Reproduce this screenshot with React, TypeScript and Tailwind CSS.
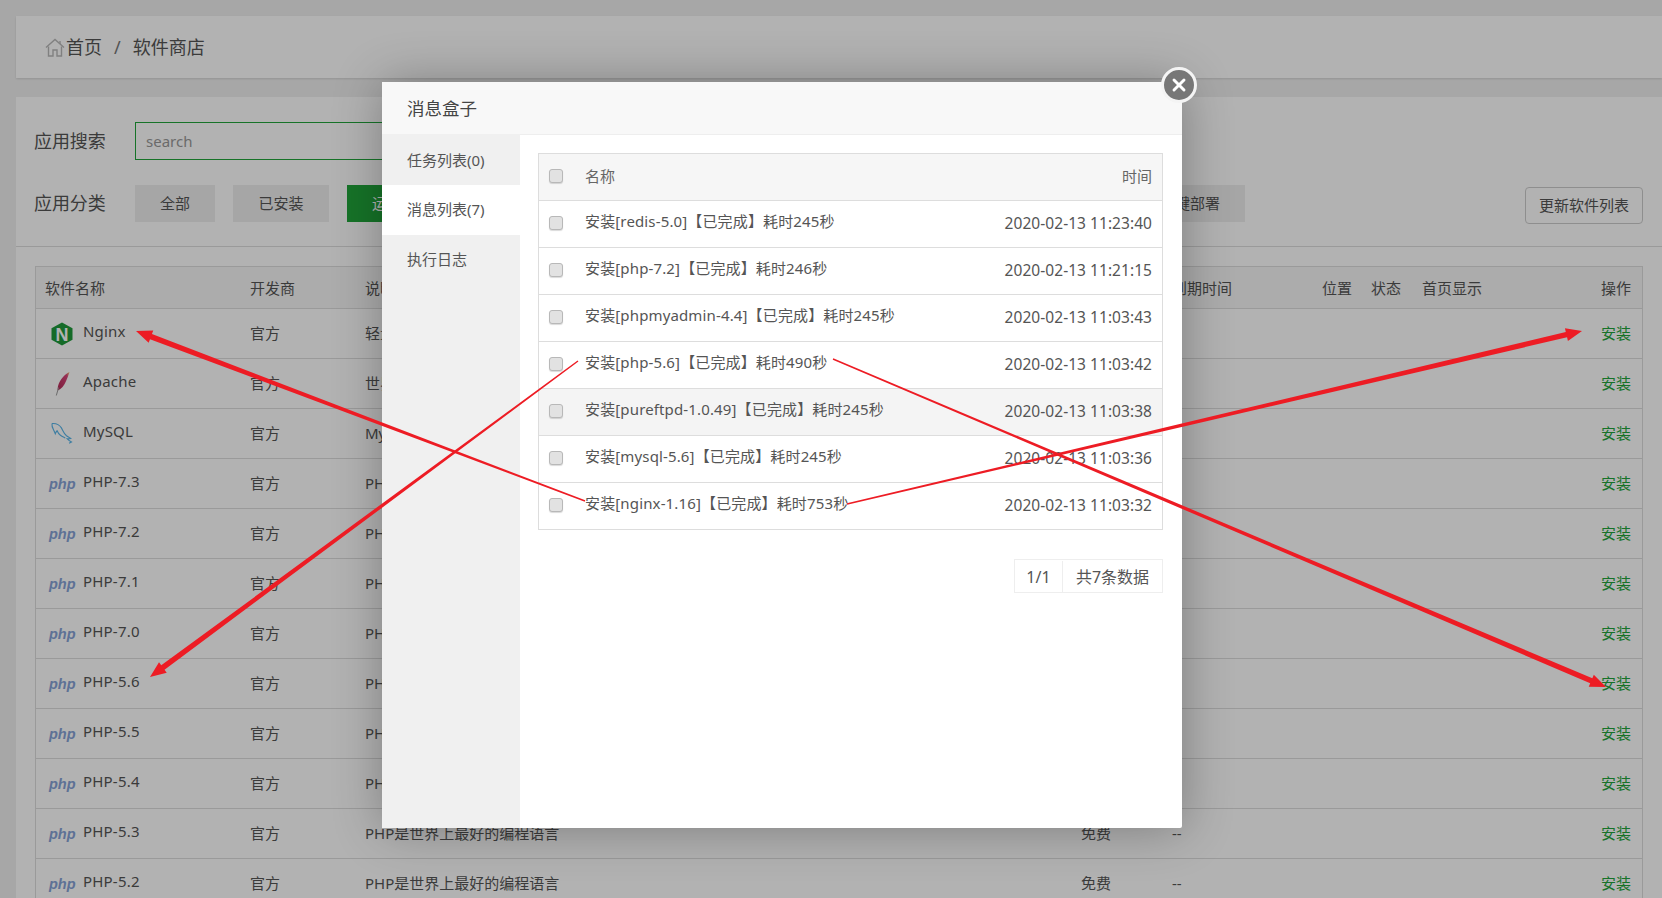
import React from "react";
import { X } from "lucide-react";

const font = "font-['Noto_Sans','Noto_Sans_CJK_SC',sans-serif]";

const apps: [string, string, string][] = [
  ["Nginx", "nginx", "轻量级，占有内存少，并发能力强"],
  ["Apache", "apache", "世界排名第一，快速、可靠并且可扩展"],
  ["MySQL", "mysql", "MySQL是一种关系数据库管理系统"],
  ["PHP-7.3", "php", "PHP是世界上最好的编程语言"],
  ["PHP-7.2", "php", "PHP是世界上最好的编程语言"],
  ["PHP-7.1", "php", "PHP是世界上最好的编程语言"],
  ["PHP-7.0", "php", "PHP是世界上最好的编程语言"],
  ["PHP-5.6", "php", "PHP是世界上最好的编程语言"],
  ["PHP-5.5", "php", "PHP是世界上最好的编程语言"],
  ["PHP-5.4", "php", "PHP是世界上最好的编程语言"],
  ["PHP-5.3", "php", "PHP是世界上最好的编程语言"],
  ["PHP-5.2", "php", "PHP是世界上最好的编程语言"],
];

const messages: [string, string][] = [
  ["安装[redis-5.0]【已完成】耗时245秒", "2020-02-13 11:23:40"],
  ["安装[php-7.2]【已完成】耗时246秒", "2020-02-13 11:21:15"],
  ["安装[phpmyadmin-4.4]【已完成】耗时245秒", "2020-02-13 11:03:43"],
  ["安装[php-5.6]【已完成】耗时490秒", "2020-02-13 11:03:42"],
  ["安装[pureftpd-1.0.49]【已完成】耗时245秒", "2020-02-13 11:03:38"],
  ["安装[mysql-5.6]【已完成】耗时245秒", "2020-02-13 11:03:36"],
  ["安装[nginx-1.16]【已完成】耗时753秒", "2020-02-13 11:03:32"],
];

function AppIcon({ kind }: { kind: string }) {
  if (kind === "nginx")
    return (
      <svg width="22" height="24" viewBox="0 0 22 24" className="block ml-[2px]">
        <polygon points="11,0.500 21.500,6.300 21.500,17.700 11,23.500 0.500,17.700 0.500,6.300" fill="#1f9a3a" />
        <text x="11" y="18.500" textAnchor="middle" fontSize="18" fontWeight="800" fill="#fff" fontFamily="Liberation Sans, sans-serif">N</text>
      </svg>
    );
  if (kind === "apache")
    return (
      <svg width="24" height="26" viewBox="0 0 24 26" className="block">
        <defs>
          <linearGradient id="fth" x1="1" y1="0" x2="0" y2="1">
            <stop offset="0" stopColor="#f6c36a" />
            <stop offset="0.22" stopColor="#d9457a" />
            <stop offset="1" stopColor="#b02a55" />
          </linearGradient>
        </defs>
        <path d="M20.500 1C15.500 3.500 11 8.500 9.200 14.500c-.5 1.900-.7 3.500-.4 4.900 3.500-1.500 6.400-4.800 8.300-9.500C18.300 7 19.600 4 20.500 1z" fill="url(#fth)" />
        <path d="M9.600 16.500L7.300 24.500" stroke="#9a9a9a" strokeWidth="1" fill="none" />
      </svg>
    );
  if (kind === "mysql")
    return (
      <svg width="26" height="24" viewBox="0 0 26 24" className="block">
        <path d="M3 1.500c4.200-.4 7.400 1.200 9.400 4.400 1.500 2.500 2.400 5.600 5.100 7.800 1.300 1 3.100 1.700 4.300 2.800-1.100.4-2.400.5-3.500.3 1.100 1.300 2.800 2.300 4.200 3.100l-2.400 1.400" fill="none" stroke="#58b4e8" strokeWidth="1.100" />
        <path d="M3 1.500c-.3 2.100.4 4.200 1.500 6.200.7 1.300 1.300 2.700 1.800 4.100.5-1.200.8-2.200 1.800-3 .7 1.700 1.800 3.200 3.300 4.400 1.700 1.400 3.200 1.900 4.900 2.800" fill="none" stroke="#58b4e8" strokeWidth="1.100" />
      </svg>
    );
  return <span className="block w-[26px] text-center text-[14.500px] leading-none italic font-bold text-[#86a2d6] font-['Liberation_Sans',sans-serif] mt-[1px]">php</span>;
}

function Checkbox({ className = "" }: { className?: string }) {
  return <span className={`block w-[14px] h-[14px] rounded-[3px] bg-[#e2e2e2] border border-[#b8b8b8] shadow-[0_1px_1px_rgba(0,0,0,0.15)] ${className}`} />;
}

function Arrow({ x1, y1, x2, y2, w0 = 1.4, w1 = 5.5, head = 16, headW = 13 }: { x1: number; y1: number; x2: number; y2: number; w0?: number; w1?: number; head?: number; headW?: number }) {
  const len = Math.hypot(x2 - x1, y2 - y1);
  const ux = (x2 - x1) / len;
  const uy = (y2 - y1) / len;
  const nx = -uy;
  const ny = ux;
  const bx = x2 - ux * head;
  const by = y2 - uy * head;
  const p = (x: number, y: number, o: number) => `${x + nx * o},${y + ny * o}`;
  const points = [p(x1, y1, w0 / 2), p(bx, by, w1 / 2), p(bx, by, headW / 2), `${x2},${y2}`, p(bx, by, -headW / 2), p(bx, by, -w1 / 2), p(x1, y1, -w0 / 2)].join(" ");
  return <polygon points={points} fill="#ed1c24" />;
}

const cats = [
  ["全部", "w-[80px]", ""],
  ["已安装", "w-[96px]", ""],
  ["运行环境", "w-[110px]", "g"],
  ["系统工具", "w-[110px]", ""],
  ["宝塔插件", "w-[110px]", ""],
  ["专业版插件", "w-[125px]", ""],
  ["企业版插件", "w-[125px]", ""],
  ["第三方", "w-[100px]", ""],
  ["一键部署", "w-[110px]", ""],
];

export default function App() {
  return (
    <div className={`relative w-[1662px] h-[898px] overflow-hidden bg-[#f0f0f0] text-[15px] text-[#555] ${font}`}>
      <div className="pl-4 pt-4">
        {/* breadcrumb */}
        <div className="h-[62px] bg-white flex items-center pl-[29px] text-[18px] shadow-[0_1px_2px_rgba(0,0,0,0.12)]">
          <svg width="20" height="19" viewBox="0 0 20 19" fill="none" stroke="#b8b8b8" strokeWidth="1.4" className="mr-[1px]">
            <path d="M1 9.500L10 1.500l9 8" />
            <path d="M3.500 8.500V18h4.500v-6h4v6h4.500V8.500" />
            <path d="M15 3v3" />
          </svg>
          <span>首页</span>
          <span className="ml-3 mr-3 text-[#777]">/</span>
          <span>软件商店</span>
        </div>

        {/* main card */}
        <div className="mt-[19px] bg-white h-[900px]">
          <div className="h-[150px] border-b border-[#ddd] relative">
            <div className="flex items-center pt-[25px] pl-[18px]">
              <span className="w-[101px] text-[18px] tracking-[-0.1px]">应用搜索</span>
              <div className="w-[640px] h-[38px] border border-[#20a53a] flex items-center pl-[10px] text-[#999] text-[15px]">search</div>
            </div>
            <div className="flex items-center mt-[25px] pl-[18px]">
              <span className="w-[101px] text-[18px] tracking-[-0.1px]">应用分类</span>
              <div className="flex gap-[18px]">
                {cats.map(([t, w, g]) => (
                  <span key={t} className={`${w} h-[37px] flex items-center justify-center whitespace-nowrap ${g ? "bg-[#20a53a] text-white" : "bg-[#eee]"}`}>{t}</span>
                ))}
              </div>
              <span className="absolute left-[1509px] top-[90px] w-[118px] h-[37px] flex items-center justify-center border border-[#ccc] rounded-[4px] whitespace-nowrap">更新软件列表</span>
            </div>
          </div>

          {/* software table */}
          <div className="ml-[19px] mr-[19px] mt-[19px] border-x border-t border-[#ddd]">
            <div className="flex items-center h-[42px] border-b border-[#ddd] bg-[#f6f6f6] pt-[2px]">
              <span className="w-[214px] pl-[9px]">软件名称</span>
              <span className="w-[115px]">开发商</span>
              <span className="w-[716px]">说明</span>
              <span className="w-[91px]">价格</span>
              <span className="w-[150px]">到期时间</span>
              <span className="w-[49px]">位置</span>
              <span className="w-[51px]">状态</span>
              <span className="flex-1">首页显示</span>
              <span className="pr-[11px]">操作</span>
            </div>
            {apps.map(([name, kind, desc]) => (
              <div key={name} className="flex items-center h-[50px] border-b border-[#ddd]">
                <div className="w-[214px] pl-[13px] flex items-center">
                  <span className="w-[34px] shrink-0 flex items-center"><AppIcon kind={kind} /></span>
                  <span className="-mt-[5px] tracking-[0.2px]">{name}</span>
                </div>
                <span className="w-[115px]">官方</span>
                <span className="w-[716px]">{desc}</span>
                <span className="w-[91px]">免费</span>
                <span className="w-[150px]">--</span>
                <span className="flex-1" />
                <span className="pr-[11px] text-[#20a53a]">安装</span>
              </div>
            ))}
          </div>
        </div>
      </div>

      {/* dim overlay */}
      <div className="absolute inset-0 bg-black/30" />

      {/* dialog */}
      <div className="absolute left-[382px] top-[82px] w-[800px] h-[746px] bg-white flex flex-col shadow-[1px_1px_50px_rgba(0,0,0,0.3)] rounded-[2px]">
        <div className="h-[52px] shrink-0 bg-[#f8f8f8] flex items-center pl-[25px] text-[17.5px] text-[#444]">消息盒子</div>
        <div className="flex-1 flex min-h-0">
          <div className="w-[138px] shrink-0 bg-[#f0f0f0]">
            <div className="h-[51px] flex items-center pl-[25px] pt-[2px]">任务列表(0)</div>
            <div className="h-[50px] flex items-center pl-[25px] pb-[1px] bg-white">消息列表(7)</div>
            <div className="h-[50px] flex items-center pl-[25px] pb-[2px]">执行日志</div>
          </div>
          <div className="flex-1 border-t border-[#eee] pt-[18px] pl-[18px] pr-[19px]">
            <div className="border-x border-t border-[#ddd]">
              <div className="flex items-center h-[47px] border-b border-[#ddd] bg-[#f6f6f6] text-[#666] pl-[10px] pr-[10px]">
                <Checkbox className="-mt-[2px]" />
                <span className="ml-[22px] flex-1 -mt-[2px]">名称</span>
                <span className="-mt-[2px]">时间</span>
              </div>
              {messages.map(([t, d], i) => (
                <div key={d} className={`flex items-center h-[47px] border-b border-[#ddd] pl-[10px] pr-[10px] ${i === 4 ? "bg-[#f4f4f4]" : ""}`}>
                  <Checkbox className="-mt-[2px]" />
                  <span className="ml-[22px] flex-1 -mt-[5px] text-[#555] whitespace-nowrap tracking-[0.14px]">{t}</span>
                  <span className="text-[#555] text-[15.500px] -mt-[1px] tracking-[0.05px]">{d}</span>
                </div>
              ))}
            </div>
            <div className="flex justify-end mt-[29px]">
              <div className="flex h-[34px] border border-[#eee] text-[16px] pt-[1px]">
                <span className="w-[48px] flex items-center justify-center border-r border-[#eee]">1/1</span>
                <span className="w-[99px] flex items-center justify-center whitespace-nowrap">共7条数据</span>
              </div>
            </div>
          </div>
        </div>
        <button className="absolute left-[779px] top-[-15px] w-[36px] h-[36px] rounded-full bg-[#777] border-[3px] border-[#f4f4f4] flex items-center justify-center">
          <X size={20} strokeWidth={3.5} color="#fff" />
        </button>
      </div>

      {/* annotation arrows */}
      <svg className="absolute inset-0 pointer-events-none" width="1662" height="898" viewBox="0 0 1662 898">
        <Arrow x1={585} y1={501} x2={136} y2={331} />
        <Arrow x1={578} y1={361} x2={150} y2={677} />
        <Arrow x1={847} y1={504} x2={1582} y2={331} />
        <Arrow x1={833} y1={359} x2={1606} y2={687} />
      </svg>
    </div>
  );
}
